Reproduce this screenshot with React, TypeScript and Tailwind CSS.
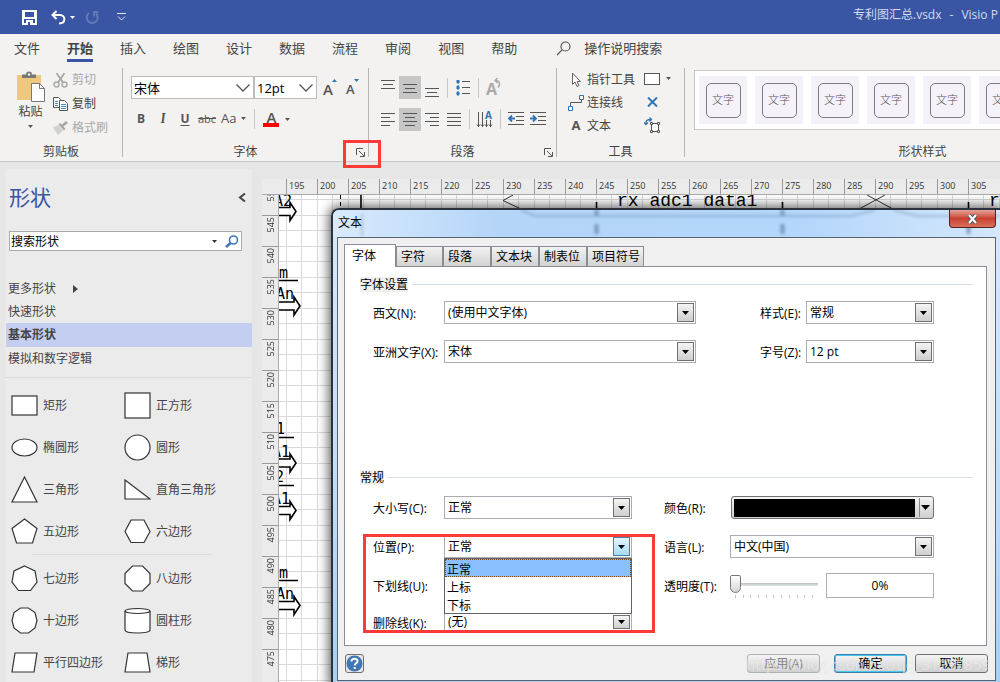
import { useState, type ReactNode } from "react";

const MENU = ["文件", "开始", "插入", "绘图", "设计", "数据", "流程", "审阅", "视图", "帮助"];

const H_MARKS = Array.from({ length: 23 }, (_, i) => 195 + i * 5);
const V_MARKS = Array.from({ length: 16 }, (_, i) => 550 - i * 5);

const DIALOG_TABS = [
  { name: "字体", width: "w-[52px]" },
  { name: "字符", width: "w-[47px]" },
  { name: "段落", width: "w-[48px]" },
  { name: "文本块", width: "w-[48px]" },
  { name: "制表位", width: "w-[48px]" },
  { name: "项目符号", width: "w-[57px]" },
];

type Shape = { name: string; art: ReactNode };

const BASIC_SHAPES: Shape[] = [
  { name: "矩形", art: <rect x="1" y="4" width="25" height="19" /> },
  { name: "正方形", art: <rect x="1" y="1" width="25" height="25" /> },
  { name: "椭圆形", art: <ellipse cx="13.5" cy="13.5" rx="12.5" ry="8.5" /> },
  { name: "圆形", art: <circle cx="13.5" cy="13.5" r="12.5" /> },
  { name: "三角形", art: <path d="M13.5 1 26 26H1z" /> },
  { name: "直角三角形", art: <path d="M1 4v19h25z" /> },
  { name: "五边形", art: <path d="M13.5 1 26 10.500 21.500 25h-16L1 10.500z" /> },
  { name: "六边形", art: <path d="M7 2h13l6 11.500-6 11H7L1 13.500z" /> },
];

const MORE_SHAPES: Shape[] = [
  { name: "七边形", art: <path d="M13.500 1 24 6l2 11-6.500 8.500h-12L1 17 3 6z" /> },
  { name: "八边形", art: <path d="M8.500 1h10L26 8.500v10L18.500 26h-10L1 18.500v-10z" /> },
  {
    name: "十边形",
    art: <path d="M9.500 1h8L24 5.500l2 8-2 7.500-6.500 5h-8L3 21l-2-7.500 2-8z" />,
  },
  {
    name: "圆柱形",
    art: (
      <>
        <path d="M1 4v19c0 4 25 4 25 0V4" />
        <ellipse cx="13.5" cy="4" rx="12.5" ry="2.5" />
      </>
    ),
  },
  { name: "平行四边形", art: <path d="M4 4h22l-3 19H1z" /> },
  { name: "梯形", art: <path d="M4 4h19l3 19H1z" /> },
];

// ---------------- Small pieces ----------------
function Caret({ className = "text-[#555]" }: { className?: string }) {
  return (
    <svg width="5" height="3" viewBox="0 0 5 3" className={className}>
      <path d="M0 0h5L2.500 3z" fill="currentColor" />
    </svg>
  );
}

function Launcher({ label }: { label: string }) {
  return (
    <button aria-label={label} className="text-[#555]">
      <svg width="9" height="9" viewBox="0 0 9 9" fill="none" stroke="currentColor">
        <path d="M.5 7V.5H7M3 3l5 5M8.500 4v4.500H4" />
      </svg>
    </button>
  );
}

// Rows of text lines used by the alignment buttons: [x1, x2] per line
function Lines({ rows, top = 0 }: { rows: [number, number][]; top?: number }) {
  return (
    <svg width="14" height="22" viewBox="0 0 14 22" stroke="#555">
      {rows.map(([a, b], i) => (
        <path key={i} d={`M${a} ${top + i * 4 + 0.5}H${b}`} />
      ))}
    </svg>
  );
}

function ToolButton({
  label,
  active = false,
  children,
}: {
  label: string;
  active?: boolean;
  children: ReactNode;
}) {
  return (
    <button
      aria-label={label}
      aria-pressed={active}
      className={`flex h-[23px] w-[22px] shrink-0 items-center justify-center ${
        active ? "bg-[#c6c6c6]" : ""
      }`}
    >
      {children}
    </button>
  );
}

function Divider() {
  return <span className="block h-5 w-px shrink-0 bg-[#c8c8c8]" />;
}

function Group({
  title,
  width,
  launcher,
  children,
}: {
  title: string;
  width: string;
  launcher?: string;
  children: ReactNode;
}) {
  return (
    <section
      className={`relative flex h-[89px] shrink-0 flex-col border-r border-[#b5b5b5] ${width}`}
    >
      <div className="flex-1">{children}</div>
      <h2 className="flex h-[11px] items-center justify-center leading-4">{title}</h2>
      {launcher && (
        <div className="absolute right-[3px] bottom-0 flex">
          <Launcher label={launcher} />
        </div>
      )}
    </section>
  );
}

// ---------------- Title bar ----------------
function TitleBar() {
  return (
    <header className="flex h-[34px] shrink-0 items-center bg-[#3955a3] pl-[22px] text-white">
      <button aria-label="保存">
        <svg width="15" height="15" viewBox="0 0 15 15">
          <path d="M0 0h15v15H0zM3 2v5h9V2zM2 9v4h2v-3h7v3h2V9z" fill="#fff" fillRule="evenodd" />
          <path d="M6 12h2v3H6z" fill="#3955a3" />
        </svg>
      </button>
      <button aria-label="撤消" className="ml-[14px] flex items-center gap-1">
        <svg width="15" height="15" viewBox="0 0 15 15" fill="none" stroke="#fff" strokeWidth="2">
          <path d="M5.500 1 1.500 5l4 4M2 5h7c6 0 6 8.500-1 8.500" />
        </svg>
        <Caret className="text-white" />
      </button>
      <button aria-label="重复" className="ml-[10px]">
        <svg width="15" height="15" viewBox="0 0 15 15" fill="none" stroke="#6379b8" strokeWidth="2">
          <path d="M4 3a5.500 5.500 0 1 0 7 .5M13.500 2H9v4.500" />
        </svg>
      </button>
      <button aria-label="自定义快速访问工具栏" className="ml-[17px]">
        <svg width="9" height="8" viewBox="0 0 9 8" fill="none" stroke="#dfe5f4">
          <path d="M0 .5h9M1 3.500l3.500 3.500L8 3.500" />
        </svg>
      </button>
      <h1 className="ml-auto flex w-[147px] gap-2 overflow-hidden pb-1 text-xs whitespace-nowrap text-[#d3dcf2]">
        <span>专利图汇总.vsdx</span>
        <span>-</span>
        <span>Visio P</span>
      </h1>
    </header>
  );
}

// ---------------- Ribbon tabs ----------------
function RibbonTabs() {
  return (
    <nav className="flex h-[30px] shrink-0 items-center gap-[27px] pl-[14px] text-[13px] text-[#444]">
      {MENU.map((item) => (
        <button
          key={item}
          className={`h-[26px] shrink-0 border-b-[3px] leading-5 ${
            item === "开始" ? "border-[#3955a3] font-bold" : "border-transparent"
          }`}
        >
          {item}
        </button>
      ))}
      <button className="ml-3 flex items-center gap-[13px]">
        <svg width="15" height="15" viewBox="0 0 15 15" fill="none" stroke="#555" strokeWidth="1.200">
          <circle cx="9.500" cy="5.500" r="4.500" />
          <path d="M6.300 8.700 1 14" />
        </svg>
        操作说明搜索
      </button>
    </nav>
  );
}

// ---------------- Ribbon ----------------
function ClipboardGroup() {
  return (
    <Group title="剪贴板" width="w-[123px]">
      <div className="flex gap-2 pl-4">
        <button className="flex w-[29px] flex-col items-center pt-[3px]">
          <svg width="29" height="31" viewBox="0 0 29 31">
            <path d="M1 4h24v25H1z" fill="#edc87e" />
            <path d="M6 7V3.500h4a3 3 0 0 1 6 0h4V7z" fill="#777" />
            <circle cx="13" cy="3.500" r="1.200" fill="#f3f2f1" />
            <path d="M15.500 12.500h8l5 5v13h-13z" fill="#fff" stroke="#777" />
            <path d="M23.500 12.500v5h5" fill="none" stroke="#777" />
          </svg>
          <span className="pt-px leading-[17px]">粘贴</span>
          <span className="mt-[5px]">
            <Caret />
          </span>
        </button>
        <div className="flex flex-col text-[#a8a8a8]">
          <button className="flex h-6 items-center gap-1">
            <svg width="15" height="15" viewBox="0 0 15 15" fill="none" stroke="currentColor" strokeWidth="1.400">
              <circle cx="3.500" cy="11.500" r="2.500" />
              <circle cx="11.500" cy="11.500" r="2.500" />
              <path d="M5 9.500 11.500 0M10 9.500 3.500 0" strokeWidth="1.800" />
            </svg>
            剪切
          </button>
          <button className="flex h-6 items-center gap-1 text-[#444]">
            <svg width="15" height="14" viewBox="0 0 15 14" fill="#fff" stroke="#555">
              <path d="M.5.500h5l2 2v8h-7z" />
              <path d="M2 4.500h3M2 6.500h3M2 8.500h3" stroke="#4a86bf" />
              <path d="M6.500 3.500h5l3 3v7h-8z" />
              <path d="M8 7.500h5M8 9.500h5M8 11.500h5" stroke="#4a86bf" />
            </svg>
            复制
          </button>
          <button className="flex h-6 items-center gap-1">
            <svg width="15" height="14" viewBox="0 0 15 14" fill="currentColor">
              <path d="M0 6.500 5 4l5 5.500L5 14z" fill="#d0d0d0" />
              <path d="m5.500 3.500 5.500 6 1.500-1.500-2-2.500L15 2l-2-2-4 3.500-2-1.500z" />
            </svg>
            格式刷
          </button>
        </div>
      </div>
    </Group>
  );
}

function FontGroup() {
  const combo =
    "block h-[23px] border border-[#bcbcbc] bg-white pl-[2px] text-[13px] text-black outline-none";
  return (
    <Group title="字体" width="w-[246px]" launcher="字体设置">
      <div className="flex items-center pt-2 pl-2">
        <div className="relative">
          <input aria-label="字体" defaultValue="宋体" className={`${combo} w-[123px] text-xs`} />
          <svg width="14" height="8" viewBox="0 0 14 8" className="absolute top-2 right-1" fill="none" stroke="#555" strokeWidth="1.300">
            <path d="m.5.500 6.500 6.500 6.500-6.500" />
          </svg>
        </div>
        <div className="relative">
          <input aria-label="字号" defaultValue="12pt" className={`${combo} w-[63px]`} />
          <svg width="14" height="8" viewBox="0 0 14 8" className="absolute top-2 right-1" fill="none" stroke="#555" strokeWidth="1.300">
            <path d="m.5.500 6.500 6.500 6.500-6.500" />
          </svg>
        </div>
        <button aria-label="增大字号" className="relative ml-[6px] w-[14px] pt-[2px] text-left text-[15px] leading-4 font-semibold text-[#555]">
          A
          <svg width="5" height="3" viewBox="0 0 5 3" className="absolute top-0 right-0" fill="#2f75b5">
            <path d="M0 3h5L2.500 0z" />
          </svg>
        </button>
        <button aria-label="减小字号" className="relative ml-[9px] w-[13px] pt-[2px] text-left text-[13px] leading-4 font-semibold text-[#555]">
          A
          <svg width="5" height="3" viewBox="0 0 5 3" className="absolute top-0 right-0" fill="#2f75b5">
            <path d="M0 0h5L2.500 3z" />
          </svg>
        </button>
      </div>
      <div className="flex h-10 items-center pl-[7px] text-[#555]">
        <button className="w-[22px] font-bold">B</button>
        <button className="w-[22px] font-serif text-[13px] font-bold italic">I</button>
        <button className="w-[22px] font-bold underline underline-offset-2">U</button>
        <button className="w-[22px] text-[11px] line-through">abc</button>
        <button className="ml-[3px] flex items-center gap-[5px] text-[13px]">
          Aa <Caret />
        </button>
        <span className="mr-2 ml-2">
          <Divider />
        </span>
        <button aria-label="字体颜色" className="flex items-center gap-1.5">
          <span className="w-4 border-b-4 border-[#f00] text-[15px] leading-3 font-semibold">A</span>
          <Caret />
        </button>
      </div>
      {/* Marks the font dialog launcher */}
      <div className="absolute top-[72px] -right-[13px] z-10 h-[28px] w-[38px] border-3 border-[#fc3a38]" />
    </Group>
  );
}

function ParagraphGroup() {
  return (
    <Group title="段落" width="w-[188px]" launcher="段落设置">
      <div className="flex items-center pt-2 pl-2">
        <ToolButton label="顶端对齐">
          <Lines rows={[[0, 14], [2, 12], [0, 14]]} top={3} />
        </ToolButton>
        <ToolButton label="中部对齐" active>
          <Lines rows={[[0, 14], [2, 12], [0, 14]]} top={7} />
        </ToolButton>
        <ToolButton label="底端对齐">
          <Lines rows={[[0, 14], [2, 12], [0, 14]]} top={11} />
        </ToolButton>
        <span className="ml-1">
          <Divider />
        </span>
        <div className="mx-1">
          <ToolButton label="项目符号">
            <svg width="14" height="16" viewBox="0 0 14 16">
              <path d="M1 0h2v3H1zM1 6h2v3H1zM1 12h2v3H1z" fill="#2f75b5" stroke="#2f75b5" />
              <path d="M6 1.500h8M6 7.500h8M6 13.500h8" stroke="#555" />
            </svg>
          </ToolButton>
        </div>
        <Divider />
        <div className="ml-1">
          <ToolButton label="旋转文本">
            <svg width="16" height="18" viewBox="0 0 16 18" fill="none" stroke="#aaa" className="overflow-visible">
              <text x="0" y="16" fontSize="16" fontWeight="700" fill="#aaa" stroke="none">A</text>
              <path d="M9 1.500c6 0 5 5 3 7M11.500-1 9 1.500 11.500 4" strokeWidth="1.500" />
            </svg>
          </ToolButton>
        </div>
      </div>
      <div className="flex h-10 items-center pl-2">
        <ToolButton label="左对齐">
          <Lines rows={[[0, 14], [0, 9], [0, 14], [0, 9]]} top={5} />
        </ToolButton>
        <ToolButton label="居中" active>
          <Lines rows={[[0, 14], [2, 12], [0, 14], [2, 12]]} top={5} />
        </ToolButton>
        <ToolButton label="右对齐">
          <Lines rows={[[0, 14], [5, 14], [0, 14], [5, 14]]} top={5} />
        </ToolButton>
        <ToolButton label="两端对齐">
          <Lines rows={[[0, 14], [0, 14], [0, 14], [0, 14]]} top={5} />
        </ToolButton>
        <span className="mr-1 ml-1">
          <Divider />
        </span>
        <ToolButton label="文字方向">
          <svg width="16" height="17" viewBox="0 0 16 17" fill="none" stroke="#555" className="overflow-visible">
            <path d="M1.500 1v15M5.500 1v15M9.500 9v7M13.500 9v7M0 13.500l1.500 2 1.500-2M4 13.500l1.500 2 1.500-2M8 13.500l1.500 2 1.500-2M12 13.500l1.500 2 1.500-2" />
            <text x="8" y="8" fontSize="10" fontWeight="700" fill="#2f75b5" stroke="none">A</text>
          </svg>
        </ToolButton>
        <span className="mr-1 ml-1">
          <Divider />
        </span>
        <ToolButton label="减少缩进量">
          <svg width="16" height="14" viewBox="0 0 16 14" fill="none" stroke="#555">
            <path d="M0 .5h16M8 4.500h8M8 8.500h8M0 12.500h16" />
            <path d="M7 6.500H1M4 3.500l-3 3 3 3" stroke="#2f75b5" strokeWidth="1.800" />
          </svg>
        </ToolButton>
        <ToolButton label="增加缩进量">
          <svg width="16" height="14" viewBox="0 0 16 14" fill="none" stroke="#555">
            <path d="M0 .5h16M8 4.500h8M8 8.500h8M0 12.500h16" />
            <path d="M0 6.500h6M3 3.500l3 3-3 3" stroke="#2f75b5" strokeWidth="1.800" />
          </svg>
        </ToolButton>
      </div>
    </Group>
  );
}

function ToolsGroup() {
  return (
    <Group title="工具" width="w-[128px]">
      <div className="flex gap-[9px] pl-[11px]">
        <div className="flex flex-col">
          <button className="flex h-[23px] items-center gap-[3px]">
            <svg width="16" height="16" viewBox="0 0 16 16" fill="#fff" stroke="#666">
              <path d="M4.500 1v11.500l2.500-2.500 2 4.500 2-1-2-4h3.500z" />
            </svg>
            指针工具
          </button>
          <button className="flex h-[23px] items-center gap-[3px]">
            <svg width="16" height="16" viewBox="0 0 16 16" fill="#fff">
              <path d="M2.500 12V7.500h9" fill="none" stroke="#555" />
              <path d="M.5 11.500h4v4h-4zM11.500.500h4v4h-4z" stroke="#2f75b5" />
              <path d="M13.500 5v2.500h-3" fill="none" stroke="#555" />
            </svg>
            连接线
          </button>
          <button className="flex h-[23px] items-center gap-[3px]">
            <span className="w-4 text-[13px] font-bold text-[#555]">A</span>
            文本
          </button>
        </div>
        <div className="flex flex-col">
          <button aria-label="矩形" className="flex h-[21px] items-center gap-1.5">
            <span className="h-3 w-4 border border-[#555] bg-white" />
            <Caret />
          </button>
          <button aria-label="连接点" className="flex h-[25px] w-4 items-center justify-center">
            <svg width="11" height="10" viewBox="0 0 11 10" stroke="#2f75b5" strokeWidth="2">
              <path d="m1 .5 9 9M10 .5l-9 9" />
            </svg>
          </button>
          <button aria-label="文本块" className="flex h-[22px] w-4 items-center">
            <svg width="16" height="16" viewBox="0 0 16 16" fill="none" stroke="#555">
              <path d="M7.500 6.500h7v8h-7z" fill="#fff" />
              <path d="M6.500 5.500h2v2h-2zM13.500 5.500h2v2h-2zM6.500 13.500h2v2h-2zM13.500 13.500h2v2h-2z" fill="#fff" />
              <path d="M2 8V5c0-2 2-2.500 5-2.500M5.500.500l2 2-2 2M0 5.500l2 2 2-2" stroke="#2f75b5" strokeWidth="1.300" />
            </svg>
          </button>
        </div>
      </div>
    </Group>
  );
}

function StylesGroup() {
  return (
    <section className="flex h-[89px] min-w-0 flex-1 flex-col pl-[9px]">
      <div className="mt-[2px] flex h-[60px] items-center gap-2 overflow-hidden border-y border-l border-[#c8c8c8] bg-white pl-1">
        {[0, 1, 2, 3, 4, 5].map((i) => (
          <button key={i} className="flex size-12 shrink-0 items-center justify-center bg-[#f5f1f8]">
            <span className="flex size-[35px] items-center justify-center rounded-[5px] border border-[#7d7d7d] text-[11px] font-light text-[#555]">
              文字
            </span>
          </button>
        ))}
      </div>
      <h2 className="mt-auto flex h-[11px] w-[457px] items-center justify-center leading-4">
        形状样式
      </h2>
    </section>
  );
}

// ---------------- Shapes panel ----------------
function ShapeGrid({ shapes }: { shapes: Shape[] }) {
  return (
    <ul className="grid grid-cols-[113px_1fr] pl-[6px]">
      {shapes.map((s) => (
        <li key={s.name} className="flex h-[42px] items-center gap-[5px]">
          <svg width="27" height="27" viewBox="0 0 27 27" fill="#fff" stroke="#333" strokeWidth="1.200">
            {s.art}
          </svg>
          <span className="pt-[2px]">{s.name}</span>
        </li>
      ))}
    </ul>
  );
}

function ShapesPanel() {
  return (
    <aside className="mt-[7px] ml-[5px] w-[247px] shrink-0 bg-[#ebebeb] text-[#444]">
      <div className="flex items-center justify-between pt-[14px] pr-[6px] pl-1">
        <h2 className="text-[21px] leading-7 text-[#3955a3]">形状</h2>
        <button aria-label="折叠">
          <svg width="8" height="9" viewBox="0 0 8 9" fill="none" stroke="#444" strokeWidth="2">
            <path d="M7 .5 2 4.500l5 4" />
          </svg>
        </button>
      </div>
      <div className="mt-5 mr-[10px] ml-1 flex h-5 items-center border border-[#ababab] bg-white">
        <input
          aria-label="搜索形状"
          defaultValue="搜索形状"
          className="min-w-0 flex-1 pt-px pl-px text-xs text-black outline-none"
        />
        <Caret className="mr-2 text-[#333]" />
        <button aria-label="搜索" className="mr-[2px]">
          <svg width="14" height="13" viewBox="0 0 14 13" fill="none" stroke="#3f76b3" strokeWidth="1.600">
            <circle cx="8.500" cy="5" r="4" />
            <path d="M5.500 8 1 12" strokeWidth="2.400" />
          </svg>
        </button>
      </div>
      <ul className="mt-[26px] ml-px leading-4">
        <li className="flex h-[23px] items-center gap-[17px] pl-[2px]">
          更多形状
          <svg width="5" height="8" viewBox="0 0 5 8" fill="#444">
            <path d="M0 0v8l5-4z" />
          </svg>
        </li>
        <li className="flex h-[23px] items-center pl-[2px]">快速形状</li>
        <li className="flex h-6 items-center bg-[#c3cef1] pl-[2px] font-bold">基本形状</li>
        <li className="flex h-6 items-center pl-[2px]">模拟和数字逻辑</li>
      </ul>
      <hr className="my-[6px] border-[#dcdcdc]" />
      <ShapeGrid shapes={BASIC_SHAPES} />
      <hr className="my-[2px] mr-[40px] ml-[27px] border-[#dcdcdc]" />
      <ShapeGrid shapes={MORE_SHAPES} />
    </aside>
  );
}

// ---------------- Drawing page ----------------
function BlockArrow({ x, y }: { x: number; y: number }) {
  return (
    <path
      d={`M0 ${y - 4}H${x - 5}v-5l6 9-6 9v-5H0`}
      fill="#fff"
      stroke="#000"
      strokeWidth="1.600"
    />
  );
}

function DrawingPage() {
  return (
    <div className="mt-[17px] ml-[10px] flex min-w-0 flex-1 flex-col">
      <div className="flex h-4 shrink-0 overflow-hidden border-b border-[#aaa] bg-[#ebebeb] text-[9px] leading-[13px] text-[#333]">
        <span className="w-6 shrink-0" />
        {H_MARKS.map((n) => (
          <span key={n} className="w-[31px] shrink-0 border-l border-[#999] pl-[2px]">
            {n}
          </span>
        ))}
      </div>
      <div className="flex min-h-0 flex-1">
        <div className="flex w-[17px] shrink-0 flex-col overflow-hidden border-r border-[#aaa] bg-[#ebebeb] text-[9px] leading-[13px] text-[#333]">
          <div className="-mt-[11px] flex flex-col">
            {V_MARKS.map((n) => (
              <span
                key={n}
                className="flex h-[31px] shrink-0 items-start justify-center border-t border-[#999] pt-px"
              >
                <span className="rotate-180 [writing-mode:vertical-rl]">{n}</span>
              </span>
            ))}
          </div>
        </div>
        <svg className="min-w-0 flex-1 bg-white" fontFamily="'DejaVu Sans Mono', monospace" fontSize="15">
          <defs>
            <pattern id="grid" width="31" height="31" x="7" y="4" patternUnits="userSpaceOnUse">
              <path d="M.5 0v31M15.500 0v31M0 .5h31M0 16.500h31" stroke="#dadada" />
            </pattern>
          </defs>
          <rect width="100%" height="100%" fill="url(#grid)" />
          <BlockArrow x={16} y={16.5} />
          <text x="-5" y="11">A2</text>
          <BlockArrow x={20} y={111} />
          <text x="0" y="83">m</text>
          <text x="-3" y="104">An</text>
          <path d="M0 85.500h19M0 242.500h15M0 290.500h15M0 385.500h19" stroke="#000" strokeWidth="1.400" />
          <text x="-3" y="239">1</text>
          <text x="-7" y="262">A1</text>
          <BlockArrow x={16} y={268} />
          <text x="-4" y="287">2</text>
          <text x="-7" y="309">A1</text>
          <BlockArrow x={16} y={315.5} />
          <text x="0" y="383">m</text>
          <text x="-3" y="404">An</text>
          <BlockArrow x={20} y={410.5} />
          <path d="M61.500 0v14" stroke="#000" strokeDasharray="4 3" />
          <path d="M82 0v14" stroke="#000" strokeWidth="1.600" />
          <path d="M234 0l-10 5.500L242 14M588 0l26 14M606 0l-26 14" stroke="#333" fill="none" />
          <path d="M317.500 7v8M503.500 7v8M689.500 7v8" stroke="#000" strokeWidth="1.600" />
          <g fontFamily="'Liberation Mono', monospace" fontSize="18">
            <text x="338" y="11">rx adc1 data1</text>
            <text x="710" y="11">r</text>
          </g>
        </svg>
      </div>
    </div>
  );
}

// ---------------- Text dialog ----------------
function Field({
  id,
  label,
  labelWidth,
  className,
  children,
}: {
  id: string;
  label: string;
  labelWidth: string;
  className: string;
  children: ReactNode;
}) {
  return (
    <div className={`flex items-center ${className}`}>
      <label htmlFor={id} className={`shrink-0 pt-[3px] ${labelWidth}`}>
        {label}
      </label>
      {children}
    </div>
  );
}

function Picker({ id, value, open = false }: { id: string; value: string; open?: boolean }) {
  return (
    <div className="relative h-full min-h-0 flex-1">
      <select
        id={id}
        defaultValue={value}
        className="block h-full w-full appearance-none border border-[#abadb3] bg-white pr-5 pl-[3px] leading-4 outline-none"
      >
        <option>{value}</option>
      </select>
      <span
        className={`pointer-events-none absolute inset-y-[2px] right-[2px] flex w-[17px] items-center justify-center border ${
          open
            ? "border-[#3c7fb1] bg-gradient-to-b from-[#e3f4fc] to-[#a6dcf5]"
            : "border-[#707070] bg-gradient-to-b from-[#f4f4f4] to-[#cfcfcf]"
        }`}
      >
        <svg width="7" height="4" viewBox="0 0 7 4">
          <path d="M0 0h7L3.500 4z" />
        </svg>
      </span>
    </div>
  );
}

function SectionTitle({ children }: { children: ReactNode }) {
  return (
    <div className="flex h-[18px] items-center gap-1">
      <h3 className="bg-[#f0f0f0] leading-[15px]">{children}</h3>
      <span className="h-px flex-1 bg-[#d5dfe5]" />
    </div>
  );
}

function TextDialog() {
  const [tab, setTab] = useState("字体");
  const [alpha, setAlpha] = useState(0);

  const button =
    "h-[19px] w-[73px] rounded-[3px] border bg-gradient-to-b from-[#f4f4f4] to-[#d0d0d0] leading-4";

  return (
    <div
      role="dialog"
      aria-labelledby="dialog-title"
      className="absolute top-[208px] right-0 left-[331px] overflow-hidden rounded-tl-lg border-t-2 border-l-2 border-[#2c323c] bg-gradient-to-b from-[#d8e9fb] via-[#c4def8] to-[#a9cff5] pr-1 pb-1 pl-1 text-black shadow-[0_0_12px_2px_rgba(0,0,0,0.65)]"
    >
      {/* Drawing seen through the glass frame */}
      <svg className="absolute top-0 left-0 h-[27px] w-full">
        <defs>
          <linearGradient id="glass">
            <stop offset="0" stopColor="#d9eafc" />
            <stop offset=".25" stopColor="#b4d5f8" />
            <stop offset=".7" stopColor="#b4d6fb" />
            <stop offset="1" stopColor="#d4e7fb" />
          </linearGradient>
          <filter id="soft">
            <feGaussianBlur stdDeviation="1.800" />
          </filter>
        </defs>
        <rect width="100%" height="27" fill="url(#glass)" />
        <g filter="url(#soft)" fill="none" stroke="#3d5f86" opacity=".5">
          <path d="M188 0l14 6h316l24-6M560 0l24 6h84" strokeWidth="2" opacity=".6" />
          <path d="M263.500 0v6M263.500 14v10M449.500 0v6M449.500 14v10M635.500 12v12" strokeWidth="4" />
          <path d="M29 4v22" strokeWidth="2" opacity=".5" />
        </g>
      </svg>

      <div className="relative flex h-[27px] items-start justify-between">
        <h2 id="dialog-title" className="pt-[5px] pl-px leading-4">
          文本
        </h2>
        <button
          aria-label="关闭"
          className="flex h-[18px] w-[47px] items-center justify-center rounded-b-[4px] border border-t-0 border-[#57221e] bg-gradient-to-b from-[#e3a39a] via-[#c8402f] to-[#d9705b]"
        >
          <svg width="11" height="10" viewBox="0 0 11 10" fill="none">
            <path d="m2 1 7 8M9 1 2 9" stroke="#4a5060" strokeWidth="4" />
            <path d="m2 1 7 8M9 1 2 9" stroke="#fff" strokeWidth="2.200" />
          </svg>
        </button>
      </div>

      <div className="relative border border-[#58656f] bg-[#f0f0f0] pt-[6px] pr-2 pb-[7px] pl-[6px]">
        <div role="tablist" className="flex h-[22px] items-end">
          {DIALOG_TABS.map((t) => (
            <button
              key={t.name}
              role="tab"
              aria-selected={t.name === tab}
              onClick={() => setTab(t.name)}
              className={`shrink-0 border border-b-0 border-[#898c95] text-left ${t.width} ${
                t.name === tab
                  ? "z-10 -mb-px h-[23px] bg-white pl-[7px]"
                  : "h-5 bg-gradient-to-b from-[#f3f3f3] to-[#d2d2d2] pl-1"
              }`}
            >
              {t.name}
            </button>
          ))}
        </div>

        <div role="tabpanel" className="border border-[#898c95] bg-white pt-2 pr-[13px] pb-[14px] pl-[15px]">
          <SectionTitle>字体设置</SectionTitle>
          <div className="mt-2 flex flex-col gap-4 pr-[39px] pl-[13px]">
            <div className="flex gap-16">
              <Field id="latin" label="西文(N):" labelWidth="w-[71px]" className="h-[23px] flex-1">
                <Picker id="latin" value="(使用中文字体)" />
              </Field>
              <Field id="style" label="样式(E):" labelWidth="w-[46px]" className="h-[23px] w-[174px]">
                <Picker id="style" value="常规" />
              </Field>
            </div>
            <div className="flex gap-16">
              <Field id="asian" label="亚洲文字(X):" labelWidth="w-[71px]" className="h-[23px] flex-1">
                <Picker id="asian" value="宋体" />
              </Field>
              <Field id="size" label="字号(Z):" labelWidth="w-[46px]" className="h-[23px] w-[174px]">
                <Picker id="size" value="12 pt" />
              </Field>
            </div>
          </div>

          <div className="h-[105px]" />

          <SectionTitle>常规</SectionTitle>
          <div className="mt-[10px] flex flex-col gap-4 pr-[39px] pl-[13px]">
            <div className="flex gap-8">
              <Field id="case" label="大小写(C):" labelWidth="w-[71px]" className="h-[23px] flex-1">
                <Picker id="case" value="正常" />
              </Field>
              <Field id="color" label="颜色(R):" labelWidth="w-[67px]" className="h-[23px] w-[270px]">
                <button
                  id="color"
                  className="flex h-full flex-1 items-center rounded-[3px] border border-[#707070] bg-gradient-to-b from-[#f4f4f4] to-[#cfcfcf] pr-[3px] pl-[2px]"
                >
                  <span className="h-[18px] flex-1 bg-black" />
                  <span className="mr-px ml-1 h-[19px] w-px bg-[#888]" />
                  <svg width="9" height="5" viewBox="0 0 9 5">
                    <path d="M0 0h9L4.500 5z" />
                  </svg>
                </button>
              </Field>
            </div>

            <div className="relative flex flex-col gap-4">
              <div className="flex gap-8">
                <div className="relative flex-1">
                  <Field id="position" label="位置(P):" labelWidth="w-[71px]" className="h-[23px]">
                    <Picker id="position" value="正常" open />
                  </Field>
                  <ul
                    role="listbox"
                    aria-label="位置"
                    className="absolute top-full right-0 left-[71px] z-10 border border-[#646464] bg-white leading-[21px]"
                  >
                    <li role="option" aria-selected="true" className="h-[18px] bg-[#8ac0ff] pl-[2px] outline-1 -outline-offset-1 outline-[#6b4a28] outline-dotted">
                      正常
                    </li>
                    <li role="option" aria-selected="false" className="h-[18px] pl-[2px]">
                      上标
                    </li>
                    <li role="option" aria-selected="false" className="h-[18px] pl-[2px]">
                      下标
                    </li>
                  </ul>
                </div>
                <Field id="lang" label="语言(L):" labelWidth="w-[66px]" className="h-[23px] w-[270px]">
                  <Picker id="lang" value="中文(中国)" />
                </Field>
              </div>

              <div className="flex gap-8">
                <Field id="underline" label="下划线(U):" labelWidth="w-[71px]" className="h-[23px] flex-1">
                  <Picker id="underline" value="(无)" />
                </Field>
                <Field id="alpha" label="透明度(T):" labelWidth="w-[66px]" className="h-[23px] w-[270px]">
                  <div className="w-[88px] pt-[2px]">
                    <input
                      id="alpha"
                      type="range"
                      value={alpha}
                      onChange={(e) => setAlpha(Number(e.target.value))}
                      className="block h-[18px] w-full appearance-none bg-[linear-gradient(#b5bcbc,#e4ebe8)] bg-[length:100%_3px] bg-center bg-no-repeat [&::-webkit-slider-thumb]:h-[18px] [&::-webkit-slider-thumb]:w-[11px] [&::-webkit-slider-thumb]:appearance-none [&::-webkit-slider-thumb]:rounded-[2px] [&::-webkit-slider-thumb]:rounded-b-[6px] [&::-webkit-slider-thumb]:border [&::-webkit-slider-thumb]:border-[#777] [&::-webkit-slider-thumb]:bg-gradient-to-b [&::-webkit-slider-thumb]:from-white [&::-webkit-slider-thumb]:to-[#d5d5d5]"
                    />
                    <div className="mt-[2px] flex justify-between px-[5px]">
                      {Array.from({ length: 11 }, (_, i) => (
                        <span key={i} className="h-[3px] w-px bg-[#c4c4c4]" />
                      ))}
                    </div>
                  </div>
                  <input
                    aria-label="透明度值"
                    readOnly
                    value={`${alpha}%`}
                    className="ml-2 h-[25px] min-w-0 flex-1 border border-[#abadb3] bg-white text-center outline-none"
                  />
                </Field>
              </div>

              <div className="flex gap-8">
                <Field id="strike" label="删除线(K):" labelWidth="w-[71px]" className="h-[18px] flex-1">
                  <Picker id="strike" value="(无)" />
                </Field>
                <span className="w-[270px]" />
              </div>

              {/* Highlight around the position list */}
              <div className="pointer-events-none absolute -top-px -left-[10px] z-20 h-[99px] w-[292px] border-3 border-[#fc3a38]" />
            </div>
          </div>
        </div>

        <div className="relative mt-2 flex items-center">
          <button
            aria-label="帮助"
            className="ml-px flex size-[19px] items-center justify-center rounded-[3px] border border-[#707070] bg-[#e6e6e6]"
          >
            <svg width="17" height="17" viewBox="0 0 17 17">
              <circle cx="8.500" cy="8.500" r="8" fill="#3f76b3" />
              <path d="M5.500 6.500c0-4 6.500-3.500 6 0-.3 1.800-2.800 1.800-2.800 4M8.700 12v2" fill="none" stroke="#fff" strokeWidth="2" />
            </svg>
          </button>
          <div className="-mr-px ml-auto flex">
            <button disabled className={`${button} mr-[14px] border-[#adb2b5] text-[#838383]`}>
              应用(A)
            </button>
            <button className={`${button} mr-2 border-[#3c7fb1] ring-1 ring-[#48c8f0] ring-inset`}>
              确定
            </button>
            <button className={`${button} border-[#707070]`}>取消</button>
          </div>
          <span className="pointer-events-none absolute -right-[3px] text-[15px] whitespace-nowrap text-white/60 [text-shadow:0_0_1px_rgba(0,0,0,0.12)]">
            https://blog.csdn.net/qq_31259859
          </span>
        </div>
      </div>
    </div>
  );
}

// ---------------- App ----------------
export default function App() {
  return (
    <main className="relative flex h-screen flex-col overflow-hidden bg-[#e6e6e6] font-['Open_Sans','Noto_Sans_CJK_SC',sans-serif] text-xs text-[#444]">
      <TitleBar />
      <div className="shrink-0 border-b border-[#c8c8c8] bg-[#f3f2f1]">
        <RibbonTabs />
        <div className="flex pt-1 pb-1">
          <ClipboardGroup />
          <FontGroup />
          <ParagraphGroup />
          <ToolsGroup />
          <StylesGroup />
        </div>
      </div>
      <div className="flex min-h-0 flex-1">
        <ShapesPanel />
        <DrawingPage />
      </div>
      <TextDialog />
    </main>
  );
}
